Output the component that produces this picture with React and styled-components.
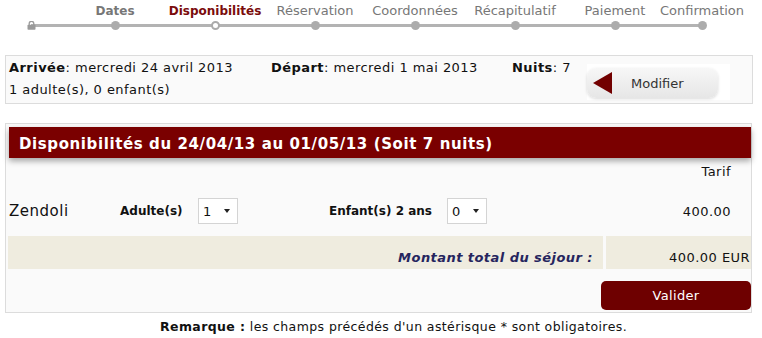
import React from 'react'
import styled, { createGlobalStyle } from 'styled-components'

const GlobalStyle = createGlobalStyle`
  body {
    margin: 0;
    background: #fff;
    font-family: "DejaVu Sans", Verdana, sans-serif;
    color: #111;
  }
`

const Page = styled.div`
  width: 762px;
  height: 338px;
  overflow: hidden;
`

const Steps = styled.div`
  display: flex;
  padding-left: 27px;
  height: 50px;
`

const LockCell = styled.div`
  width: 38px;
  display: flex;
  flex-direction: column;
`

const StepCell = styled.div`
  width: ${p => (p.$last ? 74 : 100)}px;
  display: flex;
  flex-direction: column;
  align-items: center;
`

const StepLabel = styled.div`
  height: 19px;
  padding-top: 2px;
  font-size: ${p => (p.$bold ? 12 : 13)}px;
  line-height: 18px;
  white-space: nowrap;
  color: ${p => (p.$active ? '#7a0c0c' : '#777')};
  font-weight: ${p => (p.$bold ? 'bold' : 'normal')};
`

const Track = styled.div`
  position: relative;
  height: 9px;
  width: 100%;
  display: flex;
  align-items: center;
  justify-content: ${p => (p.$start ? 'flex-start' : 'center')};

  &::before {
    content: '';
    position: absolute;
    top: 3px;
    height: 3px;
    left: ${p => (p.$start ? '4px' : '0')};
    right: ${p => (p.$last ? '50%' : '0')};
    background: #b3b3b3;
  }
`

const Dot = styled.span`
  position: relative;
  box-sizing: border-box;
  width: 9px;
  height: 9px;
  border-radius: 50%;
  background: ${p => (p.$active ? '#fff' : '#acacac')};
  border: ${p => (p.$active ? '2px solid #aaa' : 'none')};
`

const Lock = styled.svg`
  position: relative;
  display: block;
`

const InfoBox = styled.div`
  margin: 5px 0 0 5px;
  width: 746px;
  height: 47px;
  border: 1px solid #dcdcdc;
  background: #fafafa;
  display: flex;
  justify-content: space-between;
`

const InfoText = styled.div`
  padding: 3px 0 0 3px;
  font-size: 13px;
  letter-spacing: 0.45px;
`

const InfoLine = styled.div`
  display: flex;
  line-height: 18px;
  height: ${p => p.$h || 18}px;
  align-items: ${p => (p.$bottom ? 'flex-end' : 'flex-start')};
`

const Field = styled.span`
  width: ${p => (p.$w ? `${p.$w}px` : 'auto')};
  white-space: nowrap;
`

const ModifWrap = styled.div`
  margin: 8px 22px 0 0;
  width: 143px;
  height: 36px;
  background: #fff;
  padding-top: 4px;
  box-sizing: border-box;
`

const ModifButton = styled.button`
  width: 131px;
  height: 30px;
  border: none;
  border-radius: 9px;
  background: linear-gradient(#f7f7f7, #e6e6e6);
  box-shadow: 0 1px 3px rgba(0, 0, 0, 0.15);
  display: flex;
  align-items: center;
  padding: 0 0 0 6px;
  font-family: inherit;
  font-size: 13px;
  color: #333;
  cursor: pointer;
`

const Arrow = styled.span`
  width: 0;
  height: 0;
  border-top: 11px solid transparent;
  border-bottom: 11px solid transparent;
  border-right: 19px solid #720000;
  margin-right: 19px;
`

const Panel = styled.div`
  margin: 19px 0 0 5px;
  width: 745px;
  border: 1px solid #dcdcdc;
  background: #fafafa;
  padding: 3px 0 2px 0;
`

const Header = styled.div`
  margin-left: 3px;
  height: 31px;
  width: 742px;
  background: #7a0000;
  box-shadow: 0 3px 6px rgba(0, 0, 0, 0.35);
  color: #fff;
  font-weight: bold;
  font-size: 15px;
  letter-spacing: 0.6px;
  line-height: 35px;
  padding-left: 10px;
  box-sizing: border-box;
`

const TarifRow = styled.div`
  height: 28px;
  line-height: 28px;
  text-align: right;
  padding-right: 20px;
  font-size: 13px;
  letter-spacing: 0.45px;
`

const RoomRow = styled.div`
  display: grid;
  grid-template-columns: 111px 78px 131px 118px 1fr auto;
  align-items: center;
  height: 50px;
  padding: 0 20px 0 3px;
`

const RoomName = styled.span`
  font-size: 15px;
  letter-spacing: 0.5px;
`

const FieldLabel = styled.span`
  font-size: 12px;
  font-weight: bold;
`

const Select = styled.div`
  box-sizing: border-box;
  width: 40px;
  height: 26px;
  border: 1px solid #d4d4d4;
  background: #fff;
  display: flex;
  align-items: center;
  justify-content: space-between;
  padding: 0 7px 0 4px;
  font-size: 13px;
`

const Caret = styled.span`
  width: 0;
  height: 0;
  border-left: 3px solid transparent;
  border-right: 3px solid transparent;
  border-top: 4px solid #222;
`

const Price = styled.span`
  font-size: 13px;
  letter-spacing: 0.45px;
`

const TotalRow = styled.div`
  display: grid;
  grid-template-columns: 595px 1fr;
  gap: 3px;
  padding-left: 2px;
  height: 33px;
`

const TotalCell = styled.div`
  background: #efecdf;
  display: flex;
  align-items: flex-end;
  justify-content: flex-end;
  padding: 0 ${p => p.$pr}px 2px 0;
  font-size: 13px;
  letter-spacing: 0.45px;
  line-height: 18px;
`

const TotalLabel = styled.span`
  color: #25255e;
  font-weight: bold;
  font-style: italic;
`

const Actions = styled.div`
  display: flex;
  justify-content: flex-end;
  padding: 12px 0 0 0;
`

const Valider = styled.button`
  width: 150px;
  height: 29px;
  border: none;
  border-radius: 5px;
  background: #6e0000;
  color: #fff;
  font-family: inherit;
  font-size: 13px;
  letter-spacing: 0.3px;
  cursor: pointer;
`

const Note = styled.p`
  margin: 6px 0 0 0;
  padding-left: 160px;
  font-size: 12.5px;
  letter-spacing: 0.4px;
  line-height: 16px;
`

const steps = [
  { label: 'Dates', bold: true },
  { label: 'Disponibilités', bold: true, active: true },
  { label: 'Réservation' },
  { label: 'Coordonnées' },
  { label: 'Récapitulatif' },
  { label: 'Paiement' },
  { label: 'Confirmation', last: true },
]

const App = () => (
  <Page>
    <GlobalStyle />
    <Steps>
      <LockCell>
        <StepLabel />
        <Track $start>
          <Lock width="9" height="9" viewBox="0 0 9 9">
            <path d="M2.2 4V2.6a2.3 2.3 0 0 1 4.6 0V4" fill="none" stroke="#9a9a9a" strokeWidth="1.3" />
            <rect x="0.5" y="3.8" width="8" height="5" rx="0.8" fill="#9a9a9a" />
          </Lock>
        </Track>
      </LockCell>
      {steps.map(s => (
        <StepCell key={s.label} $last={s.last}>
          <StepLabel $bold={s.bold} $active={s.active}>{s.label}</StepLabel>
          <Track $last={s.last}>
            <Dot $active={s.active} />
          </Track>
        </StepCell>
      ))}
    </Steps>

    <InfoBox>
      <InfoText>
        <InfoLine>
          <Field $w={262}><b>Arrivée</b>: mercredi 24 avril 2013</Field>
          <Field $w={241}><b>Départ</b>: mercredi 1 mai 2013</Field>
          <Field><b>Nuits</b>: 7</Field>
        </InfoLine>
        <InfoLine $h={22} $bottom>1 adulte(s), 0 enfant(s)</InfoLine>
      </InfoText>
      <ModifWrap>
        <ModifButton type="button">
          <Arrow />
          Modifier
        </ModifButton>
      </ModifWrap>
    </InfoBox>

    <Panel>
      <Header>Disponibilités du 24/04/13 au 01/05/13 (Soit 7 nuits)</Header>
      <TarifRow>Tarif</TarifRow>
      <RoomRow>
        <RoomName>Zendoli</RoomName>
        <FieldLabel>Adulte(s)</FieldLabel>
        <Select>1<Caret /></Select>
        <FieldLabel>Enfant(s) 2 ans</FieldLabel>
        <Select>0<Caret /></Select>
        <Price>400.00</Price>
      </RoomRow>
      <TotalRow>
        <TotalCell $pr={10}><TotalLabel>Montant total du séjour :</TotalLabel></TotalCell>
        <TotalCell $pr={1}>400.00 EUR</TotalCell>
      </TotalRow>
      <Actions>
        <Valider type="button">Valider</Valider>
      </Actions>
    </Panel>

    <Note><b>Remarque :</b> les champs précédés d'un astérisque * sont obligatoires.</Note>
  </Page>
)

export default App
